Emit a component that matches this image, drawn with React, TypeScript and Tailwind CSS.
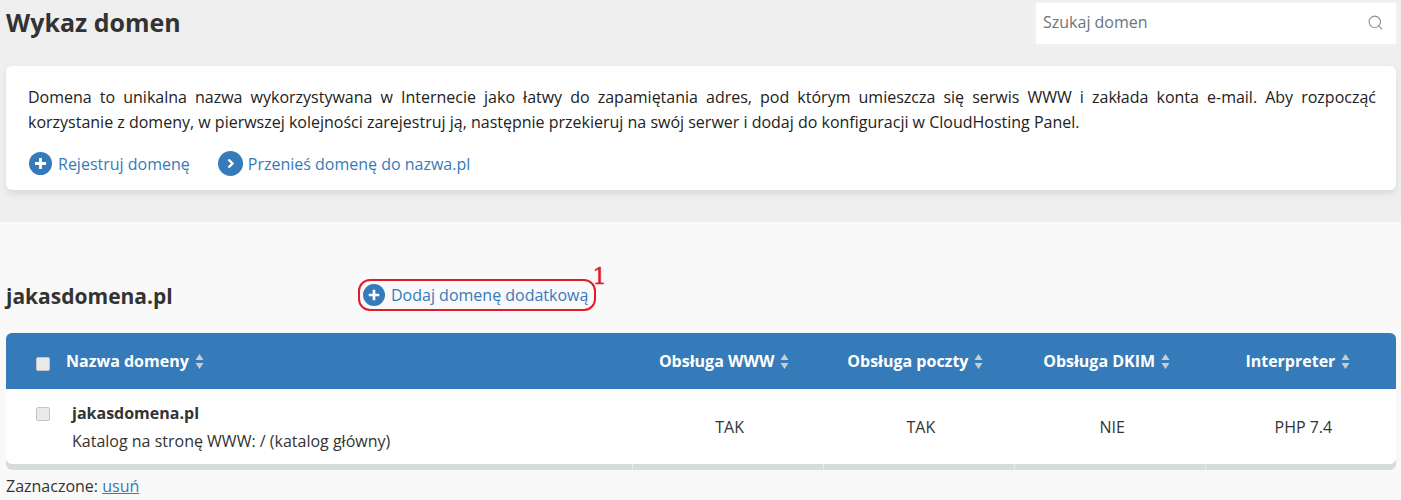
import { Search } from "lucide-react";

const columns = ["Obsługa WWW", "Obsługa poczty", "Obsługa DKIM", "Interpreter"];
const values = ["TAK", "TAK", "NIE", "PHP 7.4"];

function SortArrows() {
  return (
    <svg width="9" height="15" viewBox="0 0 9 15" className="ml-[6px] shrink-0">
      <path d="M4.5 0L8.5 6H0.5Z" fill="#c9ccd0" />
      <path d="M4.5 15L8.5 9H0.5Z" fill="#c9ccd0" />
    </svg>
  );
}

function PlusIcon({ size = 23 }: { size?: number }) {
  return (
    <svg width={size} height={size} viewBox="0 0 23 23" className="shrink-0">
      <circle cx="11.5" cy="11.5" r="11.5" fill="#367bb9" />
      <path d="M11.5 6V17M6 11.5H17" stroke="#fff" strokeWidth="2.8" />
    </svg>
  );
}

function ChevronIcon() {
  return (
    <svg width="25" height="25" viewBox="0 0 25 25" className="shrink-0">
      <circle cx="12.5" cy="12.5" r="12.5" fill="#367bb9" />
      <path d="M10.5 8.5L14.5 12.5L10.5 16.5" fill="none" stroke="#fff" strokeWidth="2.4" />
    </svg>
  );
}

function Checkbox() {
  return <span className="block h-[14px] w-[14px] rounded-[2px] border border-[#c4c4c4] bg-[#e9e9e9]" />;
}

export default function App() {
  return (
    <div className="h-[500px] overflow-hidden bg-[#f9f9f9] font-['Open_Sans',sans-serif] text-[16px] text-[#333]">
      <div className="h-[222px] bg-[#efefef] px-[6px] pr-[5px]">
        <div className="flex h-[66px] items-start justify-between">
          <h1 className="mt-[4px] text-[25px] leading-[36px] font-bold">Wykaz domen</h1>
          <div className="mt-[3px] flex h-[41px] w-[360px] items-center justify-between bg-white pr-[12px] pl-[7px] text-[#6c757d] shadow-[0_0_4px_#f6f6f6]">
            <span className="-mt-[4px] text-[16px]">Szukaj domen</span>
            <Search size={17} strokeWidth={1.5} className="-mt-[2px] text-[#8a9096]" />
          </div>
        </div>

        <div className="h-[124px] rounded-[6px] bg-white pt-[19px] pr-[20px] pl-[22px] shadow-[0_4px_6px_#d6dbde]">
          <div className="text-[16px] leading-[25px] text-[#222]">
            <p className="text-justify [text-align-last:justify]">
              Domena to unikalna nazwa wykorzystywana w Internecie jako łatwy do zapamiętania adres, pod którym umieszcza
              się serwis WWW i zakłada konta e-mail. Aby rozpocząć
            </p>
            <p>
              korzystanie z domeny, w pierwszej kolejności zarejestruj ją, następnie przekieruj na swój serwer i dodaj do
              konfiguracji w CloudHosting Panel.
            </p>
          </div>
          <div className="mt-[16px] ml-[1px] flex items-center text-[#367bb9]">
            <PlusIcon />
            <span className="ml-[6px] text-[16px]">Rejestruj domenę</span>
            <span className="ml-[28px]"><ChevronIcon /></span>
            <span className="ml-[5px] text-[16px]">Przenieś domenę do nazwa.pl</span>
          </div>
        </div>
      </div>

      <div className="px-[6px] pr-[5px]">
        <div className="flex h-[111px] items-end">
          <h2 className="w-[352px] pb-[22px] text-[21px] leading-[30px] font-bold">jakasdomena.pl</h2>
          <div className="relative mb-[22px] flex h-[32px] w-[238px] items-center rounded-[12px] border-2 border-[#e01b2a] pl-[3px] text-[#367bb9]">
            <PlusIcon size={22} />
            <span className="ml-[6px] text-[16px] whitespace-nowrap">Dodaj domenę dodatkową</span>
            <span className="absolute -top-[19px] -right-[13px] font-['DejaVu_Serif',serif] text-[23px] leading-[28px] text-[#e01b2a] [-webkit-text-stroke:0.4px_#e01b2a]">
              1
            </span>
          </div>
        </div>

        <div className="overflow-hidden rounded-[6px] bg-[#d6dbde]">
          <div className="grid h-[56px] grid-cols-[625.5px_repeat(4,191.25px)] items-center bg-[#367bb9] text-[16px] font-bold text-white">
            <div className="flex items-center pl-[30px]">
              <span className="mt-[6px]"><Checkbox /></span>
              <span className="ml-[16px]">Nazwa domeny</span>
              <SortArrows />
            </div>
            {columns.map((col) => (
              <div key={col} className="flex items-center justify-center pr-[6px]">
                <span>{col}</span>
                <SortArrows />
              </div>
            ))}
          </div>
          <div className="grid h-[75px] grid-cols-[625.5px_repeat(4,191.25px)] items-center rounded-b-[6px] bg-white text-[#333]">
            <div className="flex items-start pl-[30px]">
              <span className="mt-[8px]"><Checkbox /></span>
              <div className="ml-[22px]">
                <div className="text-[16px] leading-[28px] font-bold">jakasdomena.pl</div>
                <div className="text-[16px] leading-[28px]">Katalog na stronę WWW: / (katalog główny)</div>
              </div>
            </div>
            {values.map((v, i) => (
              <div key={i} className="pl-[5px] text-center text-[16px]">
                {v}
              </div>
            ))}
          </div>
          <div className="grid h-[6px] grid-cols-[625.5px_repeat(4,191.25px)]">
            <div />
            {values.map((_, i) => (
              <div key={i} className="border-l border-[#e8ebed]" />
            ))}
          </div>
        </div>

        <div className="mt-[4px] text-[16px] leading-[24px]">
          Zaznaczone: <span className="text-[#367bb9] underline">usuń</span>
        </div>
      </div>
    </div>
  );
}
